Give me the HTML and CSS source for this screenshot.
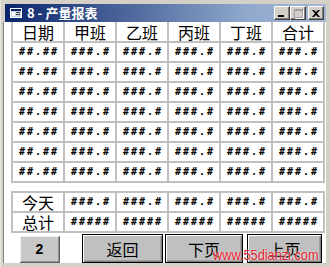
FILE: index.html
```html
<!DOCTYPE html>
<html>
<head>
    <title>8 - 产量报表</title>
    <link rel="stylesheet" href="styles.css">
</head>
<body>
    <div class="window">
        <div class="titlebar">
            <svg class="app-icon" width="12" height="10" viewBox="0 0 12 10">
                <rect x="0.5" y="0.5" width="11" height="9" fill="#c8d4e8" stroke="#ffffff"/>
                <rect x="1" y="1" width="10" height="2" fill="#0a246a"/>
                <rect x="2" y="4" width="3" height="4" fill="#ffffff"/>
                <rect x="6" y="4" width="4" height="1" fill="#404040"/>
                <rect x="6" y="6" width="4" height="1" fill="#404040"/>
            </svg>
            <span class="title">8 - 产量报表</span>
            <div class="caption-btns">
                <span class="cbtn min"><i></i></span>
                <span class="cbtn max"><i></i></span>
                <span class="cbtn close">
                    <svg width="8" height="7" viewBox="0 0 8 7">
                        <path d="M0 0h2l2 2 2-2h2L5 3.5 8 7H6L4 5 2 7H0l3-3.5z" fill="#000"/>
                    </svg>
                </span>
            </div>
        </div>
        <div class="client">
            <div class="grid main">
                <div class="cell head">日期</div>
                <div class="cell head">甲班</div>
                <div class="cell head">乙班</div>
                <div class="cell head">丙班</div>
                <div class="cell head">丁班</div>
                <div class="cell head">合计</div>

                <div class="cell">##.##</div><div class="cell">###.#</div><div class="cell">###.#</div><div class="cell">###.#</div><div class="cell">###.#</div><div class="cell">###.#</div>
                <div class="cell">##.##</div><div class="cell">###.#</div><div class="cell">###.#</div><div class="cell">###.#</div><div class="cell">###.#</div><div class="cell">###.#</div>
                <div class="cell">##.##</div><div class="cell">###.#</div><div class="cell">###.#</div><div class="cell">###.#</div><div class="cell">###.#</div><div class="cell">###.#</div>
                <div class="cell">##.##</div><div class="cell">###.#</div><div class="cell">###.#</div><div class="cell">###.#</div><div class="cell">###.#</div><div class="cell">###.#</div>
                <div class="cell">##.##</div><div class="cell">###.#</div><div class="cell">###.#</div><div class="cell">###.#</div><div class="cell">###.#</div><div class="cell">###.#</div>
                <div class="cell">##.##</div><div class="cell">###.#</div><div class="cell">###.#</div><div class="cell">###.#</div><div class="cell">###.#</div><div class="cell">###.#</div>
                <div class="cell">##.##</div><div class="cell">###.#</div><div class="cell">###.#</div><div class="cell">###.#</div><div class="cell">###.#</div><div class="cell">###.#</div>
            </div>

            <div class="grid summary">
                <div class="cell head">今天</div>
                <div class="cell">###.#</div><div class="cell">###.#</div><div class="cell">###.#</div><div class="cell">###.#</div><div class="cell">###.#</div>
                <div class="cell head">总计</div>
                <div class="cell">#####</div><div class="cell">#####</div><div class="cell">#####</div><div class="cell">#####</div><div class="cell">#####</div>
            </div>

            <div class="buttons">
                <button class="btn page-no">2</button>
                <button class="btn back">返回</button>
                <button class="btn next">下页</button>
                <button class="btn prev">上页</button>
            </div>

            <div class="watermark">www.55dianzi.com</div>
        </div>
    </div>
</body>
</html>
```

FILE: styles.css
```css
body {
    margin: 0;
    background: #d4d0c8;
}
.window {
    position: relative;
    width: 330px;
    height: 267px;
    box-sizing: border-box;
    padding: 4px 4px 4px 4px;
    background: #d4d0c8;
    border-left: 1px solid #e8e6e0;
    display: flex;
    flex-direction: column;
}
.titlebar {
    height: 18px;
    display: flex;
    align-items: center;
    background: linear-gradient(to right, #0a246a, #8fa8cc 75%, #a6b8d4);
    color: #fff;
}
.app-icon {
    margin-left: 5px;
    margin-right: 5px;
}
.title {
    font-family: "Noto Sans CJK SC", "Liberation Sans", sans-serif;
    font-weight: bold;
    font-size: 13px;
    line-height: 18px;
}
.caption-btns {
    margin-left: auto;
    margin-right: 2px;
    display: flex;
}
.cbtn {
    width: 16px;
    height: 14px;
    box-sizing: border-box;
    background: #d4d0c8;
    border: 1px solid;
    border-color: #fff #404040 #404040 #fff;
    box-shadow: inset -1px -1px 0 #808080;
    display: flex;
    align-items: center;
    justify-content: center;
    position: relative;
}
.cbtn.max {
    margin-right: 2px;
}
.min i {
    position: absolute;
    left: 3px;
    bottom: 2px;
    width: 6px;
    height: 2px;
    background: #000;
}
.max i {
    width: 7px;
    height: 6px;
    border: 1px solid #a0a0a0;
    border-top-width: 2px;
    box-shadow: 1px 1px 0 #fff;
}
.client {
    flex: 1;
    background: #fff;
    border-left: 1px solid #808080;
    margin-left: -2px;
    padding-left: 2px;
    position: relative;
}
.grid {
    display: grid;
    grid-template-columns: repeat(6, 50px);
    gap: 2px;
    background: #c0c0c0;
    width: max-content;
    margin-left: 5px;
}
.main {
    grid-template-rows: 19px repeat(7, 18px);
    padding: 0 2px 2px;
}
.summary {
    grid-template-rows: 18px 18px;
    padding: 2px;
    margin-top: 8px;
}
.cell {
    background: #fff;
    display: flex;
    align-items: center;
    justify-content: center;
    font-family: "DejaVu Sans Mono", monospace;
    font-weight: bold;
    font-size: 10px;
    line-height: 1;
    letter-spacing: 2px;
    padding-left: 2px;
    color: #000;
}
.cell.head {
    font-family: "Noto Sans CJK SC", sans-serif;
    font-weight: normal;
    font-size: 16px;
    letter-spacing: 0;
    padding: 0;
}
.buttons {
    display: flex;
    align-items: flex-end;
    height: 29px;
    margin-top: 1px;
}
.btn {
    height: 29px;
    padding: 0;
    background: #c0c0c0;
    border: 1px solid #000;
    box-shadow: inset 1px 1px 0 #fff, inset -1px -1px 0 #808080, inset -2px -2px 0 #a0a0a0;
    font-family: "Noto Sans CJK SC", sans-serif;
    font-size: 16px;
    color: #000;
}
.btn.page-no {
    width: 40px;
    height: 27px;
    margin-left: 14px;
    background: #c8c8c8;
    border: none;
    border-right: 1px solid #606060;
    border-bottom: 1px solid #606060;
    box-shadow: inset 1px 1px 0 #f0f0f0, inset -1px -1px 0 #909090;
    font-family: "Liberation Sans", sans-serif;
    font-weight: bold;
    font-size: 14px;
}
.btn.back {
    width: 81px;
    margin-left: 22px;
}
.btn.next {
    width: 78px;
    margin-left: 2px;
}
.btn.prev {
    width: 75px;
    margin-left: 4px;
}
.watermark {
    position: absolute;
    left: 209px;
    bottom: 0px;
    font-family: "Liberation Sans", sans-serif;
    font-size: 15px;
    color: #e4202c;
    transform: scaleX(0.85);
    transform-origin: left bottom;
    text-shadow: 0 0 2px #fff;
    white-space: nowrap;
}
```
